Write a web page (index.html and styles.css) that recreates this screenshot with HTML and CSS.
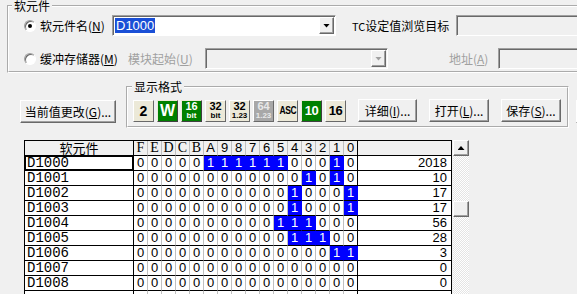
FILE: index.html
```html
<!DOCTYPE html>
<html lang="zh">
<head>
    <meta charset="UTF-8">
    <title>软元件批量监视</title>
    <link rel="stylesheet" href="styles.css">
</head>
<body>
<div class="window">
    <fieldset class="group device-group">
        <legend>软元件</legend>
        <div class="group-body">
            <div class="line">
                <span class="radio checked"></span>
                <span class="label name-label">软元件名(<u>N</u>)</span>
                <div class="combo device-combo">
                    <span class="combo-text"><span class="selected">D1000</span></span>
                    <span class="drop"><span class="arrow"></span></span>
                </div>
                <span class="label tc-label"><span class="tc">TC</span>设定值浏览目标</span>
                <div class="edit tc-edit"></div>
            </div>
            <div class="line second">
                <span class="radio"></span>
                <span class="label buffer-label">缓冲存储器(<u>M</u>)</span>
                <span class="label disabled module-label">模块起始(<u>U</u>)</span>
                <div class="combo module-combo disabled">
                    <span class="combo-text"></span>
                    <span class="drop"><span class="arrow"></span></span>
                </div>
                <span class="label disabled addr-label">地址(<u>A</u>)</span>
                <div class="edit addr-edit"></div>
            </div>
        </div>
    </fieldset>

    <div class="toolbar">
        <button class="btn change-btn" type="button">当前值更改(<u>G</u>)...</button>
        <fieldset class="group format-group">
            <legend>显示格式</legend>
            <div class="format-body">
                <span class="fmt beige"><b class="big">2</b></span>
                <span class="fmt green"><b class="w">W</b></span>
                <span class="fmt green"><b class="num">16</b><b class="sub">bit</b></span>
                <span class="fmt beige"><b class="num">32</b><b class="sub">bit</b></span>
                <span class="fmt beige"><b class="num">32</b><b class="sub">1.23</b></span>
                <span class="fmt grey"><b class="num">64</b><b class="sub">1.23</b></span>
                <span class="fmt beige"><b class="asc">ASC</b></span>
                <span class="fmt green"><b class="dec">10</b></span>
                <span class="fmt beige"><b class="dec">16</b></span>
                <button class="btn detail-btn" type="button">详细(<u>I</u>)...</button>
                <button class="btn open-btn" type="button">打开(<u>L</u>)...</button>
                <button class="btn save-btn" type="button">保存(<u>S</u>)...</button>
            </div>
        </fieldset>
        <button class="btn edge-btn" type="button"></button>
    </div>

    <div class="monitor">
        <table class="grid">
            <colgroup>
                <col class="c-name">
                <col class="c-bit"><col class="c-bit"><col class="c-bit"><col class="c-bit">
                <col class="c-bit"><col class="c-bit"><col class="c-bit"><col class="c-bit">
                <col class="c-bit"><col class="c-bit"><col class="c-bit"><col class="c-bit">
                <col class="c-bit"><col class="c-bit"><col class="c-bit"><col class="c-bit">
                <col class="c-val">
            </colgroup>
            <tr class="head">
                <td class="name-head">软元件</td>
                <td class="letter">F</td><td class="letter">E</td><td class="letter">D</td><td class="letter">C</td>
                <td class="letter">B</td><td>A</td><td>9</td><td>8</td>
                <td>7</td><td>6</td><td>5</td><td>4</td>
                <td>3</td><td>2</td><td>1</td><td>0</td>
                <td></td>
            </tr>
            <tr>
                <td class="name focus">D1000</td>
                <td>0</td><td>0</td><td>0</td><td>0</td>
                <td>0</td><td class="on">1</td><td class="on">1</td><td class="on">1</td>
                <td class="on">1</td><td class="on">1</td><td class="on">1</td><td>0</td>
                <td>0</td><td>0</td><td class="on">1</td><td>0</td>
                <td class="val">2018</td>
            </tr>
            <tr>
                <td class="name">D1001</td>
                <td>0</td><td>0</td><td>0</td><td>0</td>
                <td>0</td><td>0</td><td>0</td><td>0</td>
                <td>0</td><td>0</td><td>0</td><td>0</td>
                <td class="on">1</td><td>0</td><td class="on">1</td><td>0</td>
                <td class="val">10</td>
            </tr>
            <tr>
                <td class="name">D1002</td>
                <td>0</td><td>0</td><td>0</td><td>0</td>
                <td>0</td><td>0</td><td>0</td><td>0</td>
                <td>0</td><td>0</td><td>0</td><td class="on">1</td>
                <td>0</td><td>0</td><td>0</td><td class="on">1</td>
                <td class="val">17</td>
            </tr>
            <tr>
                <td class="name">D1003</td>
                <td>0</td><td>0</td><td>0</td><td>0</td>
                <td>0</td><td>0</td><td>0</td><td>0</td>
                <td>0</td><td>0</td><td>0</td><td class="on">1</td>
                <td>0</td><td>0</td><td>0</td><td class="on">1</td>
                <td class="val">17</td>
            </tr>
            <tr>
                <td class="name">D1004</td>
                <td>0</td><td>0</td><td>0</td><td>0</td>
                <td>0</td><td>0</td><td>0</td><td>0</td>
                <td>0</td><td>0</td><td class="on">1</td><td class="on">1</td>
                <td class="on">1</td><td>0</td><td>0</td><td>0</td>
                <td class="val">56</td>
            </tr>
            <tr>
                <td class="name">D1005</td>
                <td>0</td><td>0</td><td>0</td><td>0</td>
                <td>0</td><td>0</td><td>0</td><td>0</td>
                <td>0</td><td>0</td><td>0</td><td class="on">1</td>
                <td class="on">1</td><td class="on">1</td><td>0</td><td>0</td>
                <td class="val">28</td>
            </tr>
            <tr>
                <td class="name">D1006</td>
                <td>0</td><td>0</td><td>0</td><td>0</td>
                <td>0</td><td>0</td><td>0</td><td>0</td>
                <td>0</td><td>0</td><td>0</td><td>0</td>
                <td>0</td><td>0</td><td class="on">1</td><td class="on">1</td>
                <td class="val">3</td>
            </tr>
            <tr>
                <td class="name">D1007</td>
                <td>0</td><td>0</td><td>0</td><td>0</td>
                <td>0</td><td>0</td><td>0</td><td>0</td>
                <td>0</td><td>0</td><td>0</td><td>0</td>
                <td>0</td><td>0</td><td>0</td><td>0</td>
                <td class="val">0</td>
            </tr>
            <tr>
                <td class="name">D1008</td>
                <td>0</td><td>0</td><td>0</td><td>0</td>
                <td>0</td><td>0</td><td>0</td><td>0</td>
                <td>0</td><td>0</td><td>0</td><td>0</td>
                <td>0</td><td>0</td><td>0</td><td>0</td>
                <td class="val">0</td>
            </tr>
            <tr class="tail">
                <td class="name"></td>
                <td></td><td></td><td></td><td></td>
                <td></td><td></td><td></td><td></td>
                <td></td><td></td><td></td><td></td>
                <td></td><td></td><td></td><td></td>
                <td class="val"></td>
            </tr>
        </table>
        <div class="vscroll">
            <span class="sb-btn"><span class="up"></span></span>
            <span class="sb-thumb"></span>
        </div>
    </div>
</div>
</body>
</html>
```

FILE: styles.css
```css
body {
    margin: 0;
    background-color: #f0f0f0;
    font-family: "Noto Sans CJK SC", "Noto Sans", sans-serif;
    font-size: 12px;
    color: #000;
    overflow: hidden;
}

.window {
    width: 577px;
    height: 294px;
    overflow: hidden;
}

u {
    text-decoration: underline;
    text-underline-offset: 1px;
}

/* group boxes */
.group {
    margin: 0;
    padding: 0;
    border: 2px groove #fff;
    min-width: 0;
    flex-shrink: 0;
}

.group legend {
    padding: 0 2px;
    line-height: 12px;
}

.device-group {
    margin-left: 7px;
    width: 640px;
}

.device-group legend {
    margin-left: 3px;
}

.group-body {
    padding: 3px 0 2px 15px;
}

.line {
    display: flex;
    align-items: center;
    height: 21px;
}

.line.second {
    margin-top: 12px;
}

.label {
    white-space: nowrap;
    line-height: 14px;
}

.label.disabled {
    color: #a0a0a0;
}

.name-label {
    width: 72px;
    margin-left: 4px;
}

.tc-label {
    width: 104px;
    margin-left: 16px;
}

.tc {
    font-size: 11px;
}

.buffer-label {
    width: 88px;
    margin-left: 4px;
}

.module-label {
    width: 77px;
}

.addr-label {
    width: 49px;
    margin-left: 61px;
}

/* radio */
.radio {
    width: 12px;
    height: 12px;
    box-sizing: border-box;
    border-radius: 50%;
    background-color: #fff;
    border: 1px solid;
    border-color: #a0a0a0 #fff #fff #a0a0a0;
    box-shadow: inset 1px 1px 0 #696969;
    display: flex;
    align-items: center;
    justify-content: center;
    flex-shrink: 0;
}

.radio.checked::after {
    content: "";
    width: 4px;
    height: 4px;
    border-radius: 50%;
    background-color: #000;
}

/* combo and edit */
.combo,
.edit {
    height: 21px;
    box-sizing: border-box;
    border: 1px solid;
    border-color: #a0a0a0 #fff #fff #a0a0a0;
    box-shadow: inset 1px 1px 0 #696969;
    flex-shrink: 0;
}

.combo {
    display: flex;
    align-items: center;
    background-color: #fff;
    padding: 1px 1px 1px 2px;
}

.combo.disabled,
.edit {
    background-color: #f0f0f0;
}

.device-combo {
    width: 224px;
}

.module-combo {
    width: 183px;
}

.combo-text {
    flex: 1;
    display: flex;
    align-items: center;
    height: 100%;
}

.selected {
    background-color: #1a4fd6;
    color: #fff;
    font-family: "Liberation Sans", sans-serif;
    font-size: 13px;
    line-height: 15px;
    padding: 0 1px;
}

.drop {
    width: 15px;
    height: 17px;
    box-sizing: border-box;
    border: 1px solid;
    border-color: #fff #696969 #696969 #fff;
    box-shadow: inset -1px -1px 0 #a0a0a0;
    background-color: #f0f0f0;
    display: flex;
    align-items: center;
    justify-content: center;
}

.arrow {
    width: 7px;
    height: 4px;
    background-color: #000;
    clip-path: polygon(0 0, 100% 0, 50% 100%);
}

.disabled .arrow {
    background-color: #a0a0a0;
}

.tc-edit {
    width: 140px;
}

.addr-edit {
    width: 100px;
}

/* toolbar */
.toolbar {
    display: flex;
    align-items: flex-start;
    margin-top: 7px;
}

.btn {
    height: 23px;
    box-sizing: border-box;
    padding: 0;
    border: 1px solid;
    border-color: #fff #696969 #696969 #fff;
    box-shadow: inset -1px -1px 0 #a0a0a0;
    background-color: #f0f0f0;
    font-family: inherit;
    font-size: 12px;
    color: #000;
    white-space: nowrap;
    flex-shrink: 0;
}

.change-btn {
    width: 96px;
    margin: 20px 10px 0 20px;
}

.format-group {
    width: 443px;
    box-sizing: border-box;
}

.format-group legend {
    margin-left: 4px;
    line-height: 14px;
}

.format-body {
    display: flex;
    align-items: center;
    gap: 3px;
    padding: 5px 0 4px 5px;
}

.fmt {
    width: 21px;
    height: 22px;
    box-sizing: border-box;
    border: 1px solid;
    border-color: #fff #696969 #696969 #fff;
    display: flex;
    flex-direction: column;
    align-items: center;
    justify-content: center;
    font-family: "Liberation Sans", sans-serif;
    line-height: 1;
    flex-shrink: 0;
}

.fmt.beige {
    background-color: #ece9d8;
    color: #000;
}

.fmt.green {
    background-color: #008000;
    color: #fff;
    border-color: #ece9d8 #404040 #404040 #ece9d8;
}

.fmt.grey {
    background-color: #a8a8a8;
    color: #e8e8e8;
}

.fmt .big {
    font-size: 14px;
}

.fmt .w {
    font-size: 16px;
}

.fmt .num {
    font-size: 11px;
    line-height: 11px;
}

.fmt .sub {
    font-size: 8px;
    line-height: 8px;
}

.fmt .asc {
    font-size: 10px;
    letter-spacing: -0.5px;
    transform: scaleX(0.85);
}

.fmt .dec {
    font-size: 13px;
    letter-spacing: -0.5px;
}

.detail-btn {
    width: 59px;
    margin-left: 9px;
}

.open-btn,
.save-btn {
    width: 60px;
    margin-left: 9px;
}

.edge-btn {
    width: 60px;
    margin: 20px 0 0 7px;
}

/* monitor table */
.monitor {
    display: flex;
    align-items: flex-start;
    margin: 12px 0 0 24px;
}

.grid {
    border-collapse: separate;
    border-spacing: 0;
    table-layout: fixed;
    width: 428px;
    border-left: 1px solid #000;
    border-top: 1px solid #000;
    background-color: #fff;
    flex-shrink: 0;
}

.c-name {
    width: 109px;
}

.c-bit {
    width: 14px;
}

.c-val {
    width: 94px;
}

.grid tr {
    height: 15px;
}

.grid td {
    padding: 0;
    height: 14px;
    line-height: 14px;
    vertical-align: middle;
    border-right: 1px solid #c0c0c0;
    border-bottom: 1px solid #000;
    text-align: center;
    font-family: "Liberation Sans", sans-serif;
    font-size: 13px;
    overflow: hidden;
    white-space: nowrap;
}

.grid td:first-child,
.grid td:nth-child(17),
.grid td:last-child {
    border-right-color: #000;
}

.grid .head td {
    background-color: #f0f0f0;
    overflow: visible;
}

.grid .head .name-head {
    font-family: "Noto Sans CJK SC", sans-serif;
    font-size: 13px;
}

.grid .head .letter {
    font-family: "Liberation Serif", serif;
    font-size: 14px;
}

.grid td.name {
    text-align: left;
    padding-left: 2px;
    font-family: "Liberation Mono", monospace;
    font-size: 14px;
}

.grid td.focus {
    box-shadow: inset 0 0 0 1px #000;
}

.grid td.on {
    background-color: #0000ff;
    color: #fff;
    border-right-color: #0000ff;
}

.grid td.val {
    text-align: right;
    padding-right: 4px;
}

/* scroll bar */
.vscroll {
    width: 16px;
    height: 160px;
    margin-left: 1px;
    display: flex;
    flex-direction: column;
    background: repeating-conic-gradient(#fff 0 25%, #e4e4e4 0 50%) 0 0 / 2px 2px;
}

.sb-btn,
.sb-thumb {
    height: 16px;
    box-sizing: border-box;
    border: 1px solid;
    border-color: #fff #696969 #696969 #fff;
    box-shadow: inset -1px -1px 0 #a0a0a0;
    background-color: #f0f0f0;
}

.sb-btn {
    display: flex;
    align-items: center;
    justify-content: center;
}

.up {
    width: 7px;
    height: 4px;
    background-color: #000;
    clip-path: polygon(50% 0, 100% 100%, 0 100%);
}

.sb-thumb {
    margin-top: 45px;
}
```
